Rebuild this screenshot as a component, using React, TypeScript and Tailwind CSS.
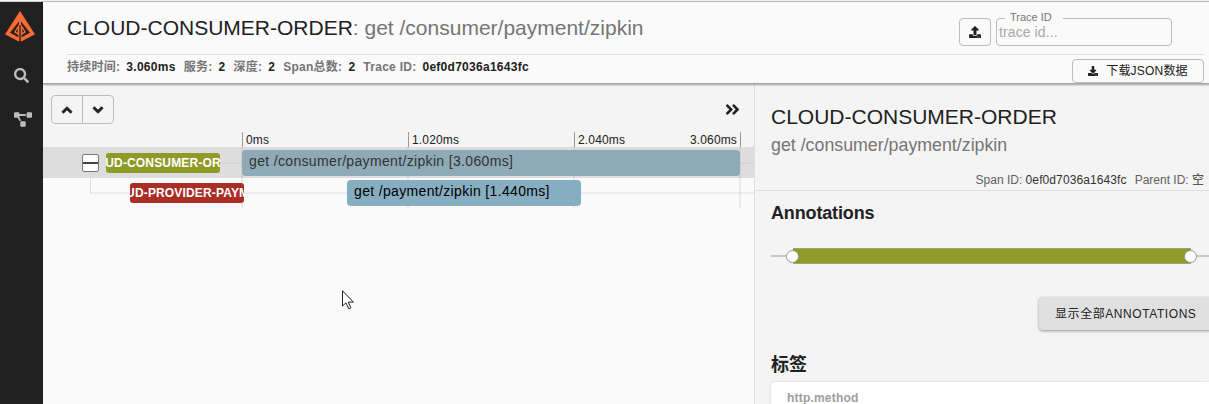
import type { ReactNode } from 'react';
import {
  FaAngleDoubleRight,
  FaAngleDown,
  FaAngleUp,
  FaDownload,
  FaProjectDiagram,
  FaSearch,
  FaUpload,
} from 'react-icons/fa';

function Logo() {
  return (
    <svg width="30" height="31" viewBox="0 0 30 31" className="block">
      <path fill="#fb6b35" d="M15 0 30 23.3 16.2 30.5 15 29.5 13.8 30.5 0 23.3Z" />
      <path fill="#212121" d="M14 10.5 5 21.8 13.4 26.2V24L9 21.3 14 13Z" />
      <path fill="#212121" d="M16 10.5 25 21.8 16.6 26.2V24L21 21.3 16 13Z" />
      <path fill="#212121" d="M12.6 17.5 10.8 20.8 12.6 21.8ZM17.4 17.5 19.2 20.8 17.4 21.8Z" />
      <path fill="#212121" d="M14.4 14h1.3v17h-1.3z" />
    </svg>
  );
}

function Sidebar() {
  return (
    <nav className="flex w-[43px] shrink-0 flex-col bg-[#212121] text-[#bdbdbd]">
      <div className="mt-[9px] ml-[5px]">
        <Logo />
      </div>
      <FaSearch className="mt-[26px] ml-[14px] size-[15px]" />
      <FaProjectDiagram className="mt-[29px] ml-[14px] h-[15px] w-[18px]" />
    </nav>
  );
}

function Stat({ label, children }: { label: string; children: ReactNode }) {
  return (
    <span className="flex gap-[6px]">
      <span className="text-[#757575]">{label}</span>
      <span>{children}</span>
    </span>
  );
}

function Header() {
  return (
    <header className="relative z-10 flex h-[81px] shrink-0 flex-col bg-[#fafafa] pr-[5px] pl-6 shadow-[0_1px_2px_1px_rgba(0,0,0,0.35)]">
      <div className="flex h-[53px] shrink-0 items-start border-b border-[#dedede]">
        <h1 className="mt-[10px] text-[21px] leading-8 whitespace-pre">
          CLOUD-CONSUMER-ORDER
          <span className="text-[#757575]">: get /consumer/payment/zipkin</span>
        </h1>
        <button className="mt-4 ml-auto flex h-7 w-8 items-center justify-center rounded border border-[#bdbdbd]">
          <FaUpload className="size-3" />
        </button>
        <fieldset className="mt-[9px] mr-8 ml-[5px] h-[35px] w-[176px] rounded border border-[#bdbdbd] pl-[2px]">
          <legend className="ml-[6px] h-[14px] pr-[11px] pl-[5px] text-[11px] leading-[13px] text-[#757575]">
            Trace ID
          </legend>
          <div className="-mt-px text-sm leading-4 tracking-[0.1px] text-[#a9a9a9]">trace id...</div>
        </fieldset>
      </div>
      <div className="flex items-start">
        <div className="mt-1 flex gap-2 text-xs leading-4 font-bold tracking-[0.27px] whitespace-nowrap">
          <Stat label="持续时间:">3.060ms</Stat>
          <Stat label="服务:">2</Stat>
          <Stat label="深度:">2</Stat>
          <Stat label="Span总数:">2</Stat>
          <Stat label="Trace ID:">0ef0d7036a1643fc</Stat>
        </div>
        <button className="mt-1 ml-auto flex h-6 w-[132px] items-center justify-center gap-2 rounded border border-[#bdbdbd] text-xs tracking-[0.2px]">
          <FaDownload className="size-[10px]" />
          下载JSON数据
        </button>
      </div>
    </header>
  );
}

function GridLines() {
  return (
    <div className="absolute inset-y-0 left-[198px] flex w-[500px] justify-between">
      <i className="w-[2px] bg-black/6" />
      <i className="w-[2px] bg-black/6" />
      <i className="w-[2px] bg-black/6" />
      <i className="w-[2px] bg-black/6" />
    </div>
  );
}

function Timeline() {
  return (
    <main className="flex w-[711px] shrink-0 flex-col">
      <div className="flex h-[49px] items-start justify-between bg-[#f4f4f4] pt-3 pr-[13px] pl-2">
        <div className="flex h-[29px] w-[63px] rounded border border-[#bdbdbd]">
          <button className="flex w-[31px] items-center justify-center border-r border-[#bdbdbd]">
            <FaAngleUp className="size-4 stroke-current stroke-[18px]" />
          </button>
          <button className="flex flex-1 items-center justify-center">
            <FaAngleDown className="size-4 stroke-current stroke-[18px]" />
          </button>
        </div>
        <FaAngleDoubleRight className="mt-[6px] size-[17px]" />
      </div>
      <div className="flex h-[15px] bg-[#f4f4f4] pl-[199px] text-xs leading-[17px] tracking-[0.15px]">
        <span className="w-[166px] border-l border-[#999] pl-[3px]">0ms</span>
        <span className="w-[166px] border-l border-[#999] pl-[3px]">1.020ms</span>
        <span className="flex w-[167px] justify-between border-x border-[#999] pr-[3px] pl-[3px]">
          <span>2.040ms</span>
          <span>3.060ms</span>
        </span>
      </div>
      <div className="relative h-[31px] bg-[#dddddd]">
        <div className="absolute top-[15px] right-0 left-[177px] h-[2px] bg-[#d6d6d6]" />
        <GridLines />
        <div className="absolute top-[7px] left-[39px] flex h-[18px] w-[17px] items-center rounded-[2px] border border-[#777] bg-white">
          <i className="h-[2px] w-full bg-[#424242]" />
        </div>
        <div className="absolute top-[6px] left-[63px] flex h-5 w-[114px] items-center justify-center overflow-hidden rounded-[3px] bg-[#909a26] text-xs font-bold tracking-[0.15px] whitespace-nowrap text-white">
          CLOUD-CONSUMER-ORDER
        </div>
        <div className="absolute top-[3px] left-[199px] h-[26px] w-[498px] rounded-[4px] bg-[#8daab6] pl-[7px] text-sm leading-[22px] tracking-[0.34px] whitespace-nowrap text-[#333]">
          get /consumer/payment/zipkin [3.060ms]
        </div>
      </div>
      <div className="relative h-[30px] bg-[#fafafa]">
        <div className="absolute top-[14px] right-0 left-[47px] h-[2px] bg-[#ececec]" />
        <i className="absolute top-0 left-[47px] h-4 w-px bg-[#dcdcdc]" />
        <GridLines />
        <div className="absolute top-[5px] left-[87px] flex h-5 w-[114px] items-center justify-center overflow-hidden rounded-[3px] bg-[#aa2d26] text-xs font-bold tracking-[0.15px] whitespace-nowrap text-white">
          CLOUD-PROVIDER-PAYMENT
        </div>
        <div className="absolute top-[2px] left-[304px] h-[26px] w-[234px] rounded-[4px] bg-[#87adc1] pl-[7px] text-sm leading-[22px] tracking-[0.34px] whitespace-nowrap text-black">
          get /payment/zipkin [1.440ms]
        </div>
      </div>
      <div className="relative flex-1 bg-[#fafafa]">
        <svg width="13" height="20" viewBox="0 0 13 20" className="absolute top-[82px] left-[299px]">
          <path d="M.5.8V16L4 12.8l2.7 6 2.2-1-2.6-5.7h5.1z" fill="#fff" stroke="#1b1b29" />
        </svg>
      </div>
    </main>
  );
}

function Detail() {
  return (
    <aside className="flex min-w-0 flex-1 flex-col overflow-hidden border-l border-[#dedede] bg-[#f4f4f4]">
      <section className="flex h-[108px] shrink-0 flex-col border-b border-[#dedede] pl-4 whitespace-nowrap">
        <h2 className="mt-5 text-[21px] leading-7">CLOUD-CONSUMER-ORDER</h2>
        <p className="mt-[2px] text-[17.8px] leading-6 text-[#757575]">get /consumer/payment/zipkin</p>
        <div className="mt-[15px] mr-[5px] flex justify-end gap-2 text-xs leading-4">
          <span className="text-[#616161]">Span ID: <span className="tracking-[0.1px] text-[#333]">0ef0d7036a1643fc</span></span>
          <span className="text-[#616161]">Parent ID: <span className="text-[#333]">空</span></span>
        </div>
      </section>
      <section className="flex flex-col pl-4">
        <h3 className="mt-[10px] text-lg leading-6 font-bold tracking-[-0.15px]">Annotations</h3>
        <div className="mt-[23px] flex h-4 items-center">
          <i className="h-[2px] w-[22px] bg-[#c9c9c9]" />
          <div className="z-10 flex h-4 w-[398px] items-center justify-between border-y border-[#a5a56b] bg-[#909a26]">
            <i className="-ml-[7px] size-[13px] rounded-full border border-[#999] bg-white" />
            <i className="-mr-[6px] size-[13px] rounded-full border border-[#999] bg-white" />
          </div>
          <i className="h-[2px] flex-1 bg-[#c9c9c9]" />
        </div>
        <button className="mt-[33px] -mr-1 flex h-[33px] w-[174px] items-center self-end rounded bg-[#e0e0e0] pl-4 text-xs tracking-[0.57px] whitespace-nowrap shadow-[0_1px_3px_rgba(0,0,0,0.4)]">
          显示全部ANNOTATIONS
        </button>
        <h3 className="mt-[23px] text-lg leading-6 font-bold">标签</h3>
        <div className="mt-[5px] h-10 rounded-tl bg-white pt-2 pl-4 text-xs leading-4 font-bold tracking-[0.2px] text-[#9e9e9e] shadow-[0_0_2px_rgba(0,0,0,0.2)]">
          http.method
        </div>
      </section>
    </aside>
  );
}

export default function App() {
  return (
    <div className="flex h-[404px] w-[1209px] flex-col overflow-hidden bg-[#fafafa] font-['Liberation_Sans','Noto_Sans_CJK_SC',sans-serif] text-[#212121]">
      <div className="h-[2px] shrink-0 border-b border-[#cfcfcf] bg-[#f8f8f8]" />
      <div className="flex min-h-0 flex-1">
        <Sidebar />
        <div className="flex min-w-0 flex-1 flex-col">
          <Header />
          <div className="flex min-h-0 flex-1">
            <Timeline />
            <Detail />
          </div>
        </div>
      </div>
    </div>
  );
}
